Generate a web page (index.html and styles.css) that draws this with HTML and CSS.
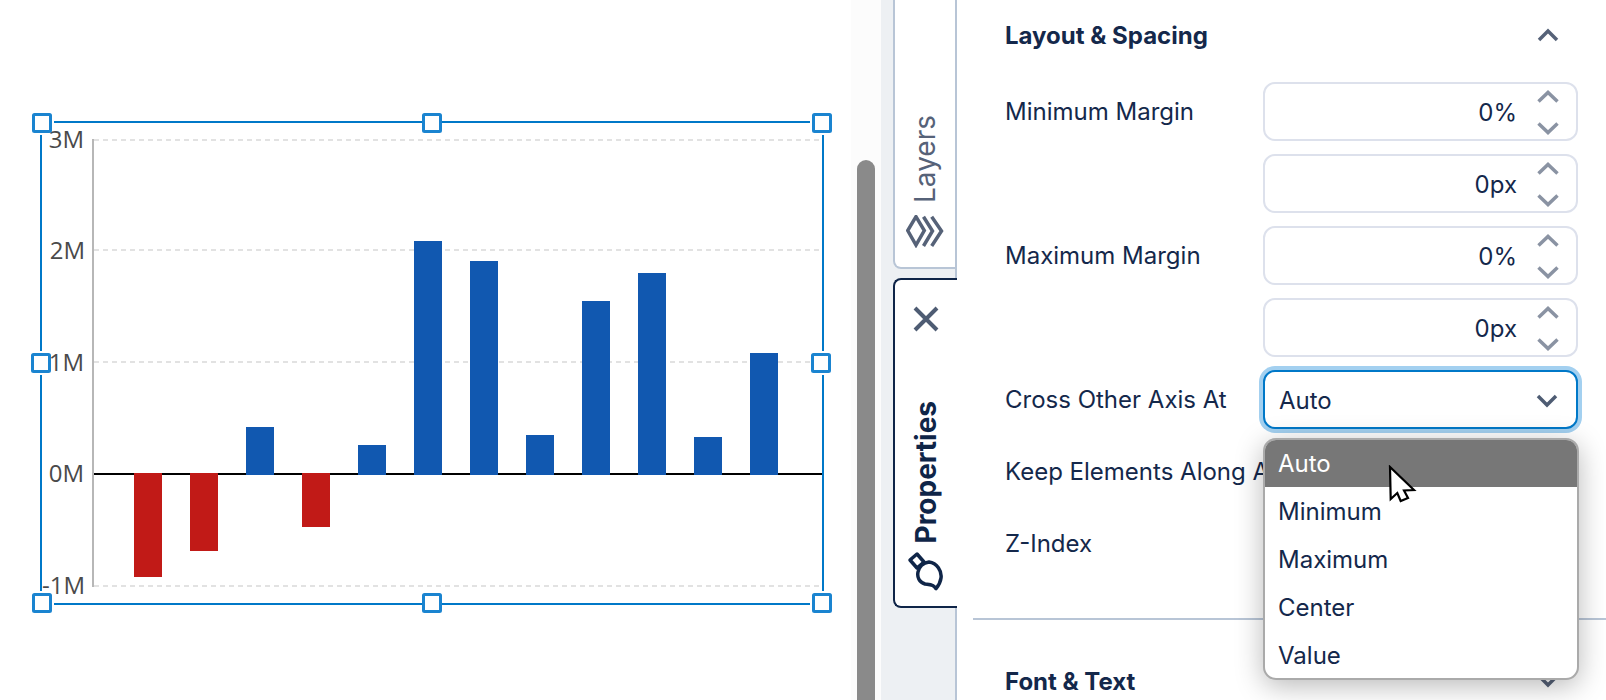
FILE: index.html
```html
<!DOCTYPE html>
<html lang="en">
<head>
<meta charset="utf-8">
<title>Chart properties</title>
<link rel="stylesheet" href="styles.css">
</head>
<body>
<div class="app">
  <main class="canvas">
    <svg class="chart" width="857" height="700" viewBox="0 0 857 700">
      <g class="grid">
        <line x1="94" x2="822" y1="140" y2="140"/>
        <line x1="94" x2="822" y1="250" y2="250"/>
        <line x1="94" x2="822" y1="362" y2="362"/>
        <line x1="94" x2="822" y1="586" y2="586"/>
      </g>
      <line class="axis-y" x1="93" x2="93" y1="139" y2="587"/>
      <line class="axis-x" x1="94" x2="823" y1="474" y2="474"/>
      <g class="neg">
        <rect x="134" y="473" width="28" height="104"/>
        <rect x="190" y="473" width="28" height="78"/>
        <rect x="302" y="473" width="28" height="54"/>
      </g>
      <g class="pos">
        <rect x="246" y="427" width="28" height="48"/>
        <rect x="358" y="445" width="28" height="30"/>
        <rect x="414" y="241" width="28" height="234"/>
        <rect x="470" y="261" width="28" height="214"/>
        <rect x="526" y="435" width="28" height="40"/>
        <rect x="582" y="301" width="28" height="174"/>
        <rect x="638" y="273" width="28" height="202"/>
        <rect x="694" y="437" width="28" height="38"/>
        <rect x="750" y="353" width="28" height="122"/>
      </g>
      <g class="ticks">
        <text x="84" y="148">3M</text>
        <text x="85" y="259">2M</text>
        <text x="84" y="371">1M</text>
        <text x="84" y="482">0M</text>
        <text x="85" y="594">-1M</text>
      </g>
      <g class="select-line">
        <line x1="54" x2="810" y1="122" y2="122"/>
        <line x1="54" x2="810" y1="604" y2="604"/>
        <line x1="41" x2="41" y1="135" y2="351"/>
        <line x1="41" x2="41" y1="375" y2="591"/>
        <line x1="823" x2="823" y1="135" y2="351"/>
        <line x1="823" x2="823" y1="375" y2="591"/>
      </g>
      <g class="handles">
        <rect x="33.500" y="114.500" width="17" height="17" rx="1"/>
        <rect x="423.500" y="114.500" width="17" height="17" rx="1"/>
        <rect x="813.500" y="114.500" width="17" height="17" rx="1"/>
        <rect x="32.500" y="354.500" width="17" height="17" rx="1"/>
        <rect x="812.500" y="354.500" width="17" height="17" rx="1"/>
        <rect x="33.500" y="594.500" width="17" height="17" rx="1"/>
        <rect x="423.500" y="594.500" width="17" height="17" rx="1"/>
        <rect x="813.500" y="594.500" width="17" height="17" rx="1"/>
      </g>
    </svg>
  </main>
  <div class="scroll-gutter"><div class="scroll-thumb"></div></div>
  <nav class="tabs">
    <div class="tab tab-layers">
      <span class="tab-label">Layers</span>
      <svg class="tab-icon" width="38" height="33" viewBox="0 0 38 33">
        <path d="M10 1.700 L1.700 15.500 L10 30 L18.300 15.500 Z"/>
        <path d="M17.500 1.700 L26.500 16 L17.500 31"/>
        <path d="M25.700 1.700 L35.500 16 L25.700 31"/>
      </svg>
    </div>
    <div class="tab tab-props">
      <svg class="tab-close" width="26" height="26" viewBox="0 0 26 26"><path d="M2 2 L24 24 M24 2 L2 24"/></svg>
      <span class="tab-label">Properties</span>
      <svg class="tab-icon" width="38" height="40" viewBox="0 0 38 40">
        <path d="M3 9 L10 3 L17 11 L10 17 Z"/>
        <path d="M22 11 C30 12 35 20 34 27 C33.500 31 32 34 29 37.700 C27 33 22 33.500 18 33 C12 31 10 26 11 21 C12 16 16 12 22 11 Z"/>
      </svg>
    </div>
  </nav>
  <aside class="panel">
    <header class="section-head section-first">
      <h2>Layout &amp; Spacing</h2>
      <svg class="chev-head" width="22" height="14" viewBox="0 0 22 14"><path d="M2 12 L11 3 L20 12"/></svg>
    </header>
    <div class="rows">
      <div class="row">
        <label>Minimum Margin</label>
        <div class="input"><span>0%</span><span class="spin"><svg width="22" height="13" viewBox="0 0 22 13"><path d="M1.500 11.500 L11 2.500 L20.500 11.500"/></svg><svg width="22" height="13" viewBox="0 0 22 13"><path d="M1.500 1.500 L11 10.500 L20.500 1.500"/></svg></span></div>
      </div>
      <div class="row">
        <label></label>
        <div class="input"><span>0px</span><span class="spin"><svg width="22" height="13" viewBox="0 0 22 13"><path d="M1.500 11.500 L11 2.500 L20.500 11.500"/></svg><svg width="22" height="13" viewBox="0 0 22 13"><path d="M1.500 1.500 L11 10.500 L20.500 1.500"/></svg></span></div>
      </div>
      <div class="row">
        <label>Maximum Margin</label>
        <div class="input"><span>0%</span><span class="spin"><svg width="22" height="13" viewBox="0 0 22 13"><path d="M1.500 11.500 L11 2.500 L20.500 11.500"/></svg><svg width="22" height="13" viewBox="0 0 22 13"><path d="M1.500 1.500 L11 10.500 L20.500 1.500"/></svg></span></div>
      </div>
      <div class="row">
        <label></label>
        <div class="input"><span>0px</span><span class="spin"><svg width="22" height="13" viewBox="0 0 22 13"><path d="M1.500 11.500 L11 2.500 L20.500 11.500"/></svg><svg width="22" height="13" viewBox="0 0 22 13"><path d="M1.500 1.500 L11 10.500 L20.500 1.500"/></svg></span></div>
      </div>
      <div class="row">
        <label>Cross Other Axis At</label>
        <div class="input select-open"><span>Auto</span><svg class="chev-select" width="22" height="14" viewBox="0 0 22 14"><path d="M2 2 L11 11 L20 2"/></svg></div>
      </div>
      <div class="row">
        <label>Keep Elements Along Axis</label>
        <div class="blank"></div>
      </div>
      <div class="row">
        <label>Z-Index</label>
        <div class="input"><span>0</span></div>
      </div>
    </div>
    <hr class="divider">
    <header class="section-head section-next">
      <h2>Font &amp; Text</h2>
      <svg class="chev-head" width="22" height="14" viewBox="0 0 22 14"><path d="M2 2 L11 11 L20 2"/></svg>
    </header>
    <ul class="menu">
      <li class="active">Auto</li>
      <li>Minimum</li>
      <li>Maximum</li>
      <li>Center</li>
      <li>Value</li>
    </ul>
    <svg class="cursor" width="30" height="40" viewBox="0 0 30 40"><path d="M2 2 L2.700 34 L9.300 28 L12.700 36 L20 33 L16 25.500 L26 25 Z"/></svg>
  </aside>
</div>
</body>
</html>
```
FILE: styles.css
```css
* { box-sizing: border-box; }
html, body { margin: 0; height: 100%; overflow: hidden; background: #fff; }
body { font-family: Inter, "Noto Sans", sans-serif; color: #14284b; }
.app { display: flex; width: 1606px; height: 700px; overflow: hidden; }

.canvas { flex: 0 0 851px; background: #fff; overflow: hidden; }
.chart { display: block; }
.grid line { stroke: #e2e2e2; stroke-width: 2; stroke-dasharray: 5 4; }
.axis-y { stroke: #b7b7b7; stroke-width: 2; }
.axis-x { stroke: #000; stroke-width: 2; }
.neg rect { fill: #c11a17; }
.pos rect { fill: #1158b0; }
.ticks text { font-family: "Open Sans", sans-serif; font-size: 24px; fill: #4a4a4a; text-anchor: end; }
.select-line line { stroke: #0078c8; stroke-width: 2; }
.handles rect { fill: #fff; stroke: #1a84d0; stroke-width: 3; }

.scroll-gutter { flex: 0 0 30px; background: #fcfcfc; padding: 160px 6px 0; }
.scroll-thumb { height: 600px; background: #8a8a8a; border-radius: 9px 9px 0 0; }

.tabs { flex: 0 0 76px; background: #edf0f3; border-right: 2px solid #b8c5d6; padding: 0 0 0 12px; display: flex; flex-direction: column; gap: 9px; }
.tab { width: 64px; margin-right: -2px; display: flex; flex-direction: column; align-items: center; background: #fff; position: relative; }
.tab-layers { height: 269px; padding-top: 115px; border: 2px solid #b8c5d6; border-top: 0; border-radius: 0 0 0 8px; }
.tab-props { height: 330px; padding-top: 26px; border: 2px solid #0f2548; border-right: 0; border-radius: 8px 0 0 8px; }
.tab-label { writing-mode: vertical-rl; transform: rotate(180deg); font-size: 28px; line-height: 32px; }
.tab-layers .tab-label { color: #566278; }
.tab-props .tab-label { font-weight: 700; color: #0f2548; margin-top: 69px; }
.tab-icon { flex: none; fill: none; stroke-width: 3.500; stroke-linejoin: miter; margin-top: 12px; }
.tab-layers .tab-icon { stroke: #566278; }
.tab-props .tab-icon { stroke: #0f2548; margin-top: 7px; stroke-linejoin: round; }
.tab-close { flex: none; fill: none; stroke: #4e5c73; stroke-width: 4; }

.panel { flex: 1 1 auto; position: relative; background: #fff; }
.section-head { display: flex; align-items: center; justify-content: space-between; padding: 0 47px 0 48px; }
.section-first { height: 70px; }
.section-head h2 { margin: 0; font-size: 24px; font-weight: 700; color: #14284b; }
.chev-head { fill: none; stroke: #566278; stroke-width: 3.500; }
.rows { display: flex; flex-direction: column; gap: 13px; padding: 12px 28px 0 48px; }
.row { display: flex; align-items: center; height: 59px; }
.row label { flex: 0 0 258px; font-size: 24px; color: #14284b; white-space: nowrap; }
.input { flex: 1 1 auto; height: 59px; border: 2px solid #dde1ec; border-radius: 12px; display: flex; align-items: center; justify-content: flex-end; padding: 2px 17px 0 14px; font-size: 24px; color: #14284b; background: #fff; }
.spin { display: flex; flex-direction: column; gap: 19px; margin-left: 20px; }
.spin svg { display: block; fill: none; stroke: #8a93a3; stroke-width: 3.500; }
.blank { flex: 1 1 auto; height: 59px; }
.select-open { border-color: #0078c8; box-shadow: 0 0 0 4px #a3d0f0; justify-content: space-between; padding: 2px 18px 0 14px; }
.chev-select { fill: none; stroke: #4e5c73; stroke-width: 3.500; }
.divider { margin: 45px 0 0 16px; border: 0; border-top: 2px solid #b8c5d6; }
.section-next { height: 122px; }

.menu { position: absolute; left: 306px; top: 438px; width: 316px; height: 242px; margin: 0; padding: 0; list-style: none; background: #fff; border: 2px solid #aaa; border-radius: 13px; overflow: hidden; box-shadow: 0 6px 28px rgba(0,0,0,.28); }
.menu li { height: 48px; display: flex; align-items: center; padding-left: 13px; font-size: 24px; color: #14284b; }
.menu li.active { height: 47px; background: #777; color: #fff; }
.cursor { position: absolute; left: 431px; top: 465px; fill: #fff; stroke: #000; stroke-width: 2.200; }
```
